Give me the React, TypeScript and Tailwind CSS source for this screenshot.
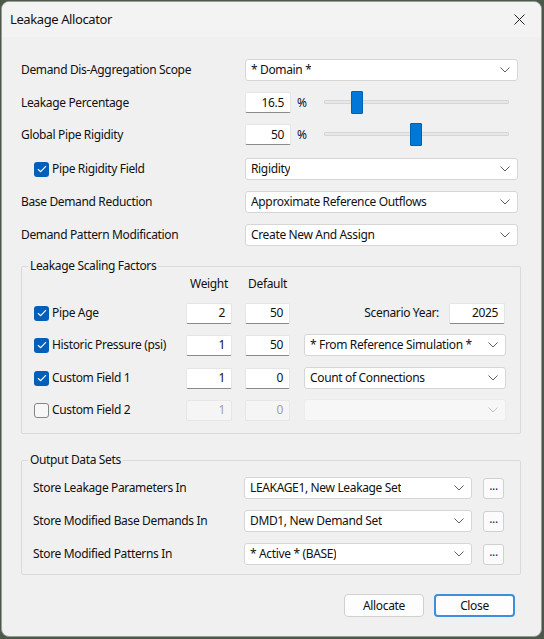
import React from "react";

const font = { fontFamily: '"Noto Sans", "Open Sans", sans-serif' };

function Chevron({ disabled = false }: { disabled?: boolean }) {
  return (
    <svg width="10" height="6" viewBox="0 0 10 6" fill="none">
      <path d="M0.5 0.5 L5 5 L9.5 0.5" stroke={disabled ? "#c4c4c4" : "#5f5f5f"} strokeWidth="1" />
    </svg>
  );
}

function Combo({ value, width, disabled = false }: { value: string; width: string; disabled?: boolean }) {
  return (
    <div
      className={`${width} flex h-[22px] items-center justify-between rounded-[3px] border pl-[5px] pr-[7px] ${
        disabled ? "border-[#ececec] bg-[#f7f7f7]" : "border-[#d6d6d6] bg-white"
      }`}
    >
      <span className="truncate">{value}</span>
      <Chevron disabled={disabled} />
    </div>
  );
}

function TextBox({ value, width, disabled = false }: { value: string; width: string; disabled?: boolean }) {
  return (
    <div
      className={`${width} flex h-[21px] items-center justify-end rounded-[2px] border pr-[6px] ${
        disabled
          ? "border-[#e6e6e6] bg-[#f5f5f5] text-[#a0a0a0]"
          : "border-[#e5e5e5] border-b-[#8a8a8a] bg-white"
      }`}
    >
      {value}
    </div>
  );
}

function Check({ checked }: { checked: boolean }) {
  return checked ? (
    <div className="flex h-[15px] w-[15px] shrink-0 items-center justify-center rounded-[3px] bg-[#005fb8]">
      <svg width="10" height="8" viewBox="0 0 10 8" fill="none">
        <path d="M1 4.2 L3.6 6.6 L9 1.2" stroke="white" strokeWidth="1.2" />
      </svg>
    </div>
  ) : (
    <div className="h-[15px] w-[15px] shrink-0 rounded-[3px] border border-[#858585] bg-[#f7f7f7]" />
  );
}

function Slider({ left }: { left: string }) {
  return (
    <div className="relative h-[23px] w-[185px]">
      <div className="absolute left-0 right-0 top-[9px] h-[4px] rounded-[1px] border border-[#d6d6d6] bg-[#e7e7e7]" />
      <div className={`absolute top-0 ${left} h-[23px] w-[12px] rounded-[1px] border border-[#0060b0] bg-[#0078d7]`} />
    </div>
  );
}

export default function App() {
  return (
    <div className="h-[639px] w-[544px] bg-[#4c5848] p-px text-[12px] tracking-[-0.35px] text-[#111]" style={font}>
      <div className="flex h-[636px] w-[541px] flex-col overflow-hidden rounded-[8px] border border-[#9a9a9a] bg-[#f0f0f0]">
        {/* title bar */}
        <div className="flex h-[35px] shrink-0 items-center justify-between bg-[#f3f3f3] pl-[8px] pr-[16px]">
          <span className="text-[13px] tracking-[-0.4px]">Leakage Allocator</span>
          <svg width="11" height="11" viewBox="0 0 11 11" fill="none">
            <path d="M0.5 0.5 L10.5 10.5 M10.5 0.5 L0.5 10.5" stroke="#222" strokeWidth="1" />
          </svg>
        </div>

        <div className="flex flex-col pl-[19px]">
          {/* top rows */}
          <div className="mt-[22px] flex h-[22px] items-center">
            <span className="w-[224px]">Demand Dis-Aggregation Scope</span>
            <Combo value="* Domain *" width="w-[273px]" />
          </div>
          <div className="mt-[10px] flex h-[23px] items-center">
            <span className="w-[224px]">Leakage Percentage</span>
            <TextBox value="16.5" width="w-[46px]" />
            <span className="w-[33px] pl-[6px]">%</span>
            <Slider left="left-[27px]" />
          </div>
          <div className="mt-[9px] flex h-[23px] items-center">
            <span className="w-[224px]">Global Pipe Rigidity</span>
            <TextBox value="50" width="w-[46px]" />
            <span className="w-[33px] pl-[6px]">%</span>
            <Slider left="left-[86px]" />
          </div>
          <div className="mt-[12px] flex h-[22px] items-center">
            <div className="flex w-[224px] items-center gap-[3px] pl-[13px]">
              <Check checked />
              <span>Pipe Rigidity Field</span>
            </div>
            <Combo value="Rigidity" width="w-[273px]" />
          </div>
          <div className="mt-[11px] flex h-[22px] items-center">
            <span className="w-[224px]">Base Demand Reduction</span>
            <Combo value="Approximate Reference Outflows" width="w-[273px]" />
          </div>
          <div className="mt-[11px] flex h-[22px] items-center">
            <span className="w-[224px]">Demand Pattern Modification</span>
            <Combo value="Create New And Assign" width="w-[273px]" />
          </div>

          {/* leakage scaling factors */}
          <fieldset className="mt-[12px] w-[500px] rounded-[2px] border border-[#dadada] pb-[12px] pl-[12px]">
            <legend className="-ml-[6px] px-[2px] leading-[16px]">Leakage Scaling Factors</legend>
            <div className="mt-[2px] flex h-[16px] items-center">
              <span className="w-[152px]" />
              <span className="w-[46px] text-center">Weight</span>
              <span className="ml-[13px] w-[45px] text-center">Default</span>
            </div>
            <div className="mt-[10px] flex h-[22px] items-center">
              <div className="flex w-[152px] items-center gap-[3px]">
                <Check checked />
                <span>Pipe Age</span>
              </div>
              <TextBox value="2" width="w-[46px]" />
              <div className="ml-[13px]">
                <TextBox value="50" width="w-[45px]" />
              </div>
              <span className="w-[159px] pr-[10px] text-right">Scenario Year:</span>
              <TextBox value="2025" width="w-[56px]" />
            </div>
            <div className="mt-[10px] flex h-[22px] items-center">
              <div className="flex w-[152px] items-center gap-[3px]">
                <Check checked />
                <span>Historic Pressure (psi)</span>
              </div>
              <TextBox value="1" width="w-[46px]" />
              <div className="ml-[13px]">
                <TextBox value="50" width="w-[45px]" />
              </div>
              <div className="ml-[14px]">
                <Combo value="* From Reference Simulation *" width="w-[202px]" />
              </div>
            </div>
            <div className="mt-[11px] flex h-[22px] items-center">
              <div className="flex w-[152px] items-center gap-[3px]">
                <Check checked />
                <span>Custom Field 1</span>
              </div>
              <TextBox value="1" width="w-[46px]" />
              <div className="ml-[13px]">
                <TextBox value="0" width="w-[45px]" />
              </div>
              <div className="ml-[14px]">
                <Combo value="Count of Connections" width="w-[202px]" />
              </div>
            </div>
            <div className="mt-[10px] flex h-[22px] items-center">
              <div className="flex w-[152px] items-center gap-[3px]">
                <Check checked={false} />
                <span>Custom Field 2</span>
              </div>
              <TextBox value="1" width="w-[46px]" disabled />
              <div className="ml-[13px]">
                <TextBox value="0" width="w-[45px]" disabled />
              </div>
              <div className="ml-[14px]">
                <Combo value="" width="w-[202px]" disabled />
              </div>
            </div>
          </fieldset>

          {/* output data sets */}
          <fieldset className="mt-[18px] w-[500px] rounded-[2px] border border-[#dadada] pb-[9px] pl-[11px]">
            <legend className="-ml-[5px] px-[2px] leading-[16px]">Output Data Sets</legend>
            {[
              "Store Leakage Parameters In|LEAKAGE1, New Leakage Set",
              "Store Modified Base Demands In|DMD1, New Demand Set",
              "Store Modified Patterns In|* Active * (BASE)",
            ].map((row, i) => {
              const [label, value] = row.split("|");
              return (
                <div key={label} className={`${i === 0 ? "mt-[9px]" : "mt-[11px]"} flex h-[22px] items-center`}>
                  <span className="w-[211px]">{label}</span>
                  <Combo value={value} width="w-[228px]" />
                  <div className="ml-[11px] flex h-[21px] w-[21px] items-start justify-center rounded-[3px] border border-[#d0d0d0] bg-[#fbfbfb] leading-[14px] text-[#2a2a60]">
                    ...
                  </div>
                </div>
              );
            })}
          </fieldset>

          {/* buttons */}
          <div className="mt-[19px] flex justify-end gap-[10px] pr-[26px]">
            <button className="h-[23px] w-[80px] rounded-[4px] border border-[#d0d0d0] bg-[#fdfdfd]">Allocate</button>
            <button className="h-[23px] w-[81px] rounded-[4px] border-2 border-[#3c8ede] bg-[#fdfdfd]">Close</button>
          </div>
        </div>
      </div>
    </div>
  );
}
